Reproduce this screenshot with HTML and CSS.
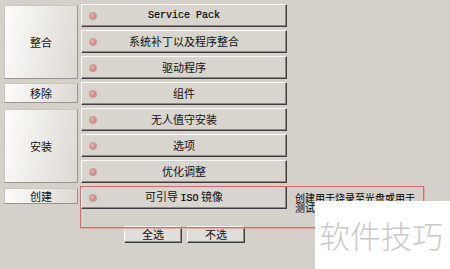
FILE: index.html
```html
<!DOCTYPE html>
<html lang="zh-CN">
<head>
<meta charset="utf-8">
<title>整合工具</title>
<link rel="stylesheet" href="styles.css">
</head>
<body>
<div class="page">
  <div class="panel">
    <div class="cat cat-merge">整合</div>
    <div class="cat cat-remove">移除</div>
    <div class="cat cat-install">安装</div>
    <div class="cat cat-create">创建</div>

    <div class="item r1"><span class="dot"></span><span class="label mono">Service Pack</span></div>
    <div class="item r2"><span class="dot"></span><span class="label">系统补丁以及程序整合</span></div>
    <div class="item r3"><span class="dot"></span><span class="label">驱动程序</span></div>
    <div class="item r4"><span class="dot"></span><span class="label">组件</span></div>
    <div class="item r5"><span class="dot"></span><span class="label">无人值守安装</span></div>
    <div class="item r6"><span class="dot"></span><span class="label">选项</span></div>
    <div class="item r7"><span class="dot"></span><span class="label">优化调整</span></div>
    <div class="item r8"><span class="dot"></span><span class="label">可引导 <span class="mono">ISO</span> 镜像</span></div>

    <div class="desc">创建用于烧录至光盘或用于测试的可引导 ISO 镜像</div>
  </div>

  <div class="actions">
    <div class="btn">全选</div>
    <div class="btn">不选</div>
  </div>

  <div class="highlight"></div>
  <div class="watermark">软件技巧</div>
</div>
</body>
</html>
```

FILE: styles.css
```css
html, body {
  margin: 0;
  padding: 0;
}

body {
  width: 450px;
  height: 269px;
  overflow: hidden;
  background: #d4d1ca;
  font-family: "Noto Sans CJK SC", "DejaVu Sans", sans-serif;
  font-size: 11px;
  color: #111;
}

.page {
  position: relative;
  width: 450px;
  height: 269px;
}

.panel {
  display: grid;
  grid-template-columns: 74px 206px 130px;
  grid-template-rows: repeat(8, 23px);
  column-gap: 3px;
  row-gap: 3px;
  padding: 4px 0 0 4px;
}

.cat {
  grid-column: 1;
  display: flex;
  align-items: center;
  justify-content: center;
  background: linear-gradient(100deg, #fdfdfc 0%, #eeece8 45%, #dcd9d3 100%);
  border: 1px solid;
  border-color: #c9c6bf #97948e #97948e #c9c6bf;
  box-sizing: border-box;
  line-height: 1;
}

.cat-merge { grid-row: 1 / 4; margin: 1px 0 0; }
.cat-remove { grid-row: 4; margin: 1px 0 2px; }
.cat-install { grid-row: 5 / 8; margin: 1px 0 0; }
.cat-create { grid-row: 8; margin: 2px 0 5px; }

.item {
  grid-column: 2;
  display: flex;
  align-items: center;
  padding: 0 14px 0 8px;
  background: #d8d5cf;
  border-style: solid;
  border-width: 1px;
  border-color: #fbfbfa #3e3e3e #3e3e3e #fbfbfa;
  box-shadow: inset -1px -1px 0 #8a8882;
  box-sizing: border-box;
}

.r1 { grid-row: 1; }
.r2 { grid-row: 2; }
.r3 { grid-row: 3; }
.r4 { grid-row: 4; }
.r5 { grid-row: 5; }
.r6 { grid-row: 6; }
.r7 { grid-row: 7; }
.r8 { grid-row: 8; }

.dot {
  width: 6px;
  height: 6px;
  border-radius: 50%;
  flex: none;
  background: radial-gradient(circle at 40% 40%, #f0b4b4 0%, #d98585 55%, #b86a6a 100%);
  box-shadow: 0 0 0 1px rgba(180, 110, 110, 0.5);
}

.label {
  flex: 1;
  text-align: center;
  line-height: 1;
  white-space: nowrap;
}

.mono {
  font-family: "Liberation Mono", "DejaVu Sans Mono", monospace;
  font-size: 10px;
  color: #000;
  -webkit-text-stroke: 0.2px #000;
}

.desc {
  grid-column: 3;
  grid-row: 8;
  align-self: start;
  margin: 7px 0 0 5px;
  width: 124px;
  font-size: 10px;
  line-height: 10px;
  color: #000;
}

.actions {
  display: flex;
  gap: 5px;
  padding-left: 124px;
  margin-top: 17px;
}

.btn {
  width: 58px;
  height: 17px;
  box-sizing: border-box;
  display: flex;
  align-items: center;
  justify-content: center;
  background: #e0ded9;
  border: 1px solid;
  border-color: #fbfbfa #404040 #404040 #fbfbfa;
  box-shadow: inset -1px -1px 0 #8a8882;
  line-height: 1;
}

.highlight {
  position: absolute;
  left: 80px;
  top: 186px;
  width: 344px;
  height: 42px;
  box-sizing: border-box;
  border: 1px solid #d46a6a;
  box-shadow: 0 0 1px 0.5px rgba(235, 150, 150, 0.7);
  pointer-events: none;
}

.watermark {
  position: absolute;
  left: 315px;
  top: 201px;
  right: 0;
  bottom: 0;
  background: #ffffff;
  color: #c9c9c9;
  font-size: 31px;
  font-weight: 300;
  line-height: 1;
  padding: 18px 0 0 4px;
  white-space: nowrap;
}
```
